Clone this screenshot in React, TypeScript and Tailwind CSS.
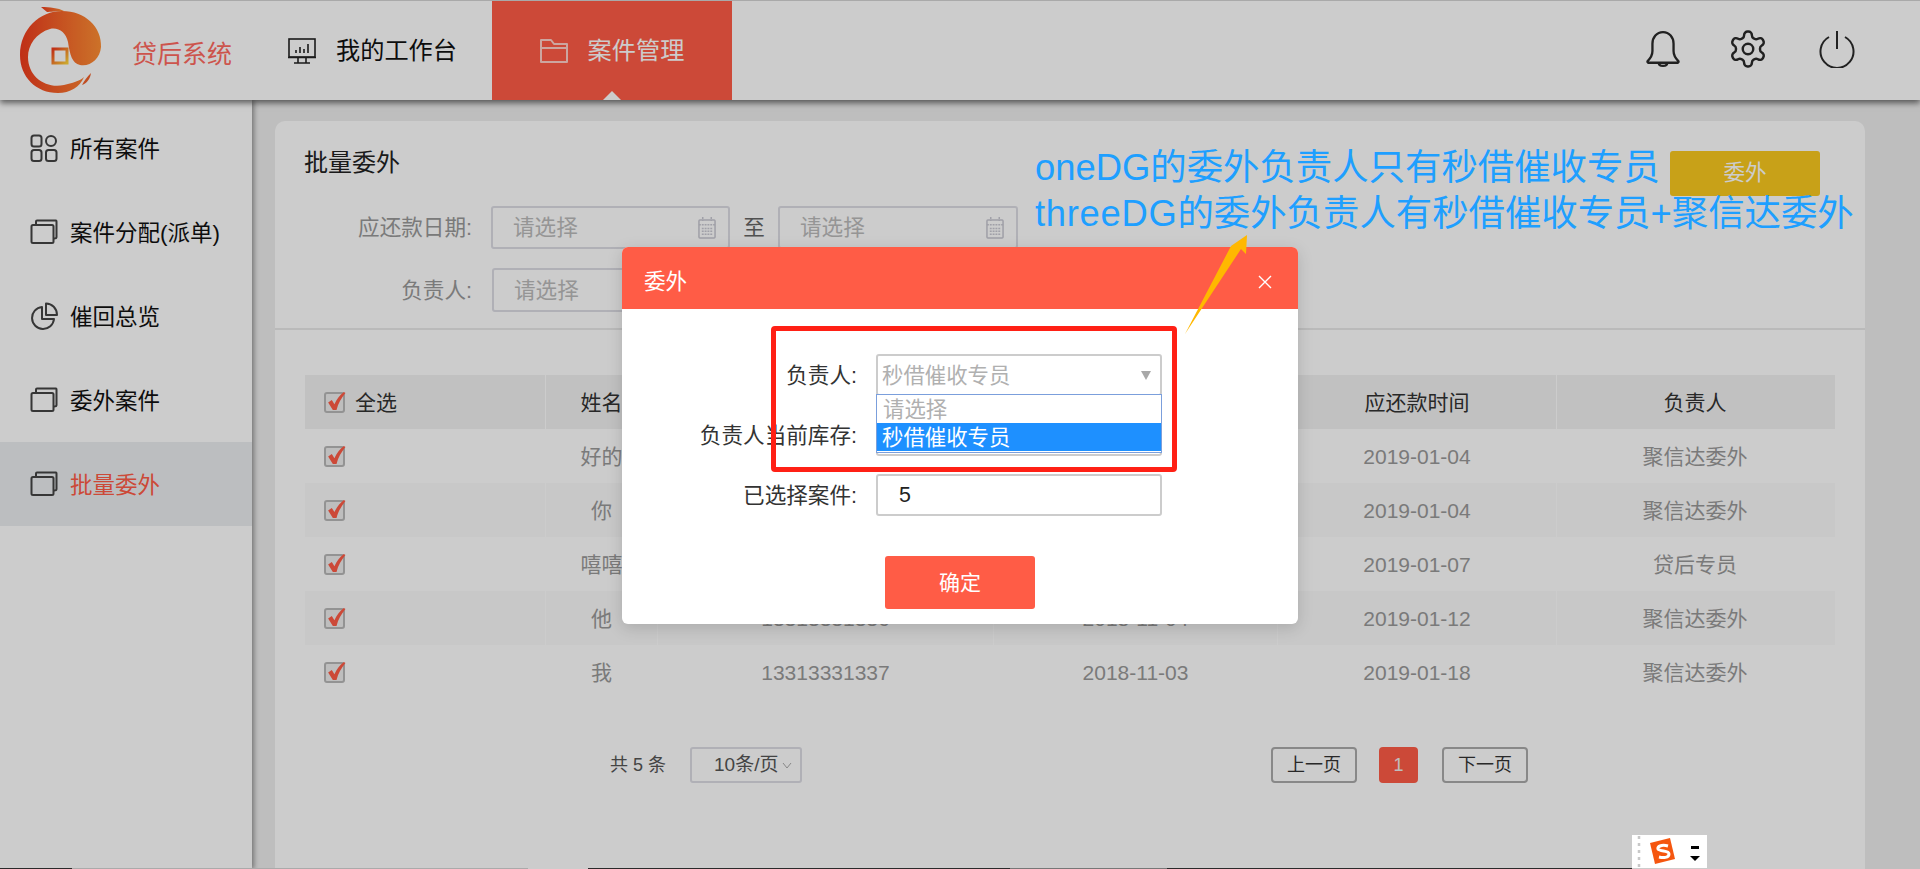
import React from "react";

const FONT = 'font-["Liberation_Sans","Noto_Sans_CJK_SC",sans-serif]';

function Logo() {
  return (
    <svg width="90" height="92" viewBox="16 8 90 92" className="shrink-0">
      <defs>
        <linearGradient id="lg" x1="0" y1="0" x2="1" y2="0">
          <stop offset="0" stopColor="#f03c1e" />
          <stop offset="1" stopColor="#ff8f34" />
        </linearGradient>
        <linearGradient id="sq" x1="0" y1="0" x2="1" y2="1">
          <stop offset="0" stopColor="#f03c1e" />
          <stop offset="1" stopColor="#ffd23a" />
        </linearGradient>
      </defs>
      <path fill="url(#lg)" d="M62 14C85 14 102 30 101 50C100 62 90 70 80 68C72 66 70 58 68 45C66 35 58 30 50 32C36 36 28 48 28 60C28 80 46 92 64 88C72 86 80 84 84 80C80 90 70 96 58 96C36 96 20 80 20 58C20 32 40 14 62 14Z" />
      <path fill="url(#lg)" d="M41 10C50 10 58 11 64 14C56 14 50 15 47 15C45 13 43 12 41 10Z" />
      <path fill="#f0602a" d="M82 88C84 84 87 80 91 76C90 82 87 86 82 88Z" />
      <rect x="53" y="52" width="14" height="14" fill="none" stroke="url(#sq)" strokeWidth="3" />
    </svg>
  );
}

function Monitor() {
  return (
    <svg width="28" height="26" viewBox="0 0 28 26" fill="none" stroke="#222" strokeWidth="1.6">
      <rect x="1" y="1" width="26" height="18" />
      <path d="M0 19.5H28M10 20V25M18 20V25M6 25H22M8 15V12M12 15V9M16 15V11M20 15V6" />
    </svg>
  );
}

function Folder() {
  return (
    <svg width="28" height="26" viewBox="0 0 28 26" fill="none" stroke="#ffd0c8" strokeWidth="2">
      <path d="M1 24V2H11L14 6H27V24ZM1 10H27" strokeLinejoin="round" />
    </svg>
  );
}

function GridIcon() {
  return (
    <svg width="28" height="28" viewBox="0 0 28 28" fill="none" stroke="#444" strokeWidth="2">
      <rect x="1.5" y="1.5" width="10" height="11" rx="2.5" />
      <circle cx="21" cy="7" r="5" />
      <rect x="1.5" y="16" width="10" height="11" rx="2.5" />
      <rect x="16" y="16" width="10.5" height="11" rx="2.5" />
    </svg>
  );
}

function StackIcon() {
  return (
    <svg width="28" height="26" viewBox="0 0 28 26" fill="none" stroke="#444" strokeWidth="2">
      <rect x="1.5" y="6" width="22" height="18" rx="1.5" />
      <path d="M6 6V2.5C6 2 6.5 1.5 7 1.5H26C26.5 1.5 26.5 2 26.5 2.5V18C26.5 19 26 19.5 24 19.5" />
    </svg>
  );
}

function PieIcon() {
  return (
    <svg width="28" height="28" viewBox="0 0 28 28" fill="none" stroke="#444" strokeWidth="2">
      <path d="M12 5A11 11 0 1 0 24 17H12Z" strokeLinejoin="round" />
      <path d="M16 1.5C22 1.5 27 6.5 27 13H16Z" strokeLinejoin="round" />
    </svg>
  );
}

function Calendar() {
  return (
    <svg width="18" height="22" viewBox="0 0 19 23" fill="none" stroke="#c8c8d2" strokeWidth="1.6">
      <rect x="1" y="3" width="17" height="19" rx="1" />
      <path d="M1 8H18M5 0V4M14 0V4M4 12H15M4 15H15M4 18H15" strokeDasharray="2 1" />
    </svg>
  );
}

function Check() {
  return (
    <div className="w-[21px] h-[21px] rounded-[3px] border-2 border-[#b8b8b8] bg-[#eeeeee] relative shrink-0">
      <svg width="20" height="21" viewBox="0 0 19 20" className="absolute left-0 -top-[3px]">
        <path d="M2 11L5.5 8.5L8 12.5C10 8 13 4 17 1L18.5 2C14.5 7 11.5 12 10 18H6.5Z" fill="#ff5c46" />
      </svg>
    </div>
  );
}

const items = [
  { t: "所有案件", i: <GridIcon /> },
  { t: "案件分配(派单)", i: <StackIcon /> },
  { t: "催回总览", i: <PieIcon /> },
  { t: "委外案件", i: <StackIcon /> },
  { t: "批量委外", i: <StackIcon />, active: true },
];

const rows = [
  ["好的", "13313331331", "2018-11-01", "2019-01-04", "聚信达委外"],
  ["你", "13313331332", "2018-11-01", "2019-01-04", "聚信达委外"],
  ["嘻嘻", "13313331335", "2018-11-02", "2019-01-07", "贷后专员"],
  ["他", "13313331336", "2018-11-04", "2019-01-12", "聚信达委外"],
  ["我", "13313331337", "2018-11-03", "2019-01-18", "聚信达委外"],
];

const cols = "grid grid-cols-[241px_112px_336px_284px_279px_276px] h-[54px] items-stretch";

function Cell({ children, last }: { children: React.ReactNode; last?: boolean }) {
  return (
    <div className={`flex items-center justify-center pt-[2px] ${last ? "" : "border-r border-[#ffffff]"}`}>{children}</div>
  );
}

export default function App() {
  return (
    <div className={`relative w-full h-[869px] overflow-hidden bg-[#eeeeee] flex flex-col ${FONT}`}>
      <header className="relative z-10 h-[100px] shrink-0 bg-white border-t border-[#d4d4d4] shadow-[0_3px_6px_rgba(0,0,0,0.55)] flex items-stretch">
        <div className="w-[288px] flex items-center">
          <div className="ml-[16px]">
            <Logo />
          </div>
          <span className="ml-[26px] mt-[8px] text-[25px] leading-none text-[#ff6a60] whitespace-nowrap">贷后系统</span>
        </div>
        <div className="w-[204px] flex items-center gap-[20px]">
          <Monitor />
          <span className="text-[24.2px] pt-[2px] text-[#111]">我的工作台</span>
        </div>
        <div className="relative w-[240px] bg-[#ff5c46] flex items-center justify-center gap-[20px]">
          <Folder />
          <span className="text-[24.2px] pt-[2px] text-white">案件管理</span>
          <div className="absolute bottom-0 left-[111px] w-0 h-0 border-x-[9px] border-x-transparent border-b-[9px] border-b-[#ffffff]" />
        </div>
        <div className="flex-1 flex items-center justify-end pr-[65px] pb-[3px]">
          <svg width="34" height="38" viewBox="0 0 32 36" fill="none" stroke="#2a2a2a" strokeWidth="2.2">
            <path strokeLinejoin="round" d="M16 2C10 2 6 7 6 13V20C6 24 4 27 1.5 29.5C1 30 1.5 31 2 31H30C30.5 31 31 30 30.5 29.5C28 27 26 24 26 20V13C26 7 22 2 16 2Z" />
            <path d="M12 31C12 35 20 35 20 31" />
          </svg>
          <svg width="42" height="42" viewBox="0 0 24 24" className="ml-[47px]" fill="none" stroke="#2a2a2a" strokeWidth="1.4" strokeLinecap="round" strokeLinejoin="round">
            <path d="M12.22 2h-.44a2 2 0 0 0-2 2v.18a2 2 0 0 1-1 1.73l-.43.25a2 2 0 0 1-2 0l-.15-.08a2 2 0 0 0-2.73.73l-.22.38a2 2 0 0 0 .73 2.73l.15.1a2 2 0 0 1 1 1.72v.51a2 2 0 0 1-1 1.74l-.15.09a2 2 0 0 0-.73 2.73l.22.38a2 2 0 0 0 2.73.73l.15-.08a2 2 0 0 1 2 0l.43.25a2 2 0 0 1 1 1.73V20a2 2 0 0 0 2 2h.44a2 2 0 0 0 2-2v-.18a2 2 0 0 1 1-1.73l.43-.25a2 2 0 0 1 2 0l.15.08a2 2 0 0 0 2.73-.73l.22-.39a2 2 0 0 0-.73-2.73l-.15-.08a2 2 0 0 1-1-1.74v-.5a2 2 0 0 1 1-1.74l.15-.09a2 2 0 0 0 .73-2.73l-.22-.38a2 2 0 0 0-2.73-.73l-.15.08a2 2 0 0 1-2 0l-.43-.25a2 2 0 0 1-1-1.73V4a2 2 0 0 0-2-2z" />
            <circle cx="12" cy="12" r="3" />
          </svg>
          <svg width="36" height="38" viewBox="0 0 36 38" className="ml-[50px]" fill="none" stroke="#2a2a2a" strokeWidth="2">
            <path d="M18 1V19" />
            <path d="M10 7A16.5 16.5 0 1 0 26 7" />
          </svg>
        </div>
      </header>

      <div className="flex-1 flex min-h-0">
        <aside className="relative w-[252px] shrink-0 bg-white pt-[6px] shadow-[2px_0_5px_rgba(0,0,0,0.4)]">
          {items.map((it) => (
            <div key={it.t} className={`h-[84px] flex items-center pl-[30px] gap-[12px] ${it.active ? "bg-[#ebeef0]" : ""}`}>
              <span className="w-[28px] flex justify-center">{it.i}</span>
              <span className={`text-[22.5px] pt-[4px] whitespace-nowrap ${it.active ? "text-[#ff5c46]" : "text-[#111]"}`}>{it.t}</span>
            </div>
          ))}
        </aside>

        <main className="flex-1 pt-[21px] pl-[23px] pr-[55px] min-w-0">
          <section className="h-[760px] bg-white rounded-t-[10px]">
            <div className="flex justify-between items-start pt-[30px] pl-[29px] pr-[45px] h-[75px]">
              <h2 className="text-[24px] leading-[24px] text-[#222]">批量委外</h2>
              <button className="w-[150px] h-[45px] rounded-[3px] bg-[#fbca1e] text-white text-[21.6px]">委外</button>
            </div>
            <div className="mt-[10px] h-[43px] flex items-stretch">
              <label className="w-[197px] flex items-center justify-end pt-[2px] text-[21.6px] text-[#999]">应还款日期:</label>
              <div className="ml-[19px] w-[239px] border-2 border-[#dcdce4] rounded-[3px] flex items-center justify-between pl-[20px] pr-[12px] text-[21.6px] text-[#bbb]">
                <span className="pt-[2px]">请选择</span>
                <Calendar />
              </div>
              <span className="w-[48px] flex items-center justify-center pt-[2px] text-[21.6px] text-[#666]">至</span>
              <div className="w-[240px] border-2 border-[#dcdce4] rounded-[3px] flex items-center justify-between pl-[20px] pr-[12px] text-[21.6px] text-[#bbb]">
                <span className="pt-[2px]">请选择</span>
                <Calendar />
              </div>
            </div>
            <div className="mt-[19px] h-[44px] flex items-stretch">
              <label className="w-[197px] flex items-center justify-end pt-[3px] text-[21.6px] text-[#999]">负责人:</label>
              <div className="ml-[20px] w-[239px] border-2 border-[#dcdce4] rounded-[3px] flex items-center pl-[20px] pt-[3px] text-[21.6px] text-[#bbb]">请选择</div>
            </div>
            <div className="mt-[16px] h-[2px] bg-[#e9e9e9]" />
            <div className="mt-[45px] mx-[30px] text-[21px]">
              <div className={`${cols} bg-[#f2f2f2] text-[#333]`}>
                <div className="flex items-center pl-[19px] gap-[10px] border-r border-white">
                  <Check />
                  <span className="pt-[2px]">全选</span>
                </div>
                <Cell>姓名</Cell>
                <Cell>手机号</Cell>
                <Cell>委案时间</Cell>
                <Cell>应还款时间</Cell>
                <Cell last>负责人</Cell>
              </div>
              {rows.map((r, i) => (
                <div key={i} className={`${cols} text-[#999] ${i % 2 === 1 ? "bg-[#fafafa]" : ""}`}>
                  <div className="flex items-center pl-[19px] border-r border-white">
                    <Check />
                  </div>
                  <Cell>{r[0]}</Cell>
                  <Cell>{r[1]}</Cell>
                  <Cell>{r[2]}</Cell>
                  <Cell>{r[3]}</Cell>
                  <Cell last>{r[4]}</Cell>
                </div>
              ))}
            </div>
            <div className="mt-[48px] h-[36px] flex items-stretch text-[18px] pl-[335px]">
              <span className="flex items-center pt-[1px] text-[#555] w-[80px] whitespace-nowrap">共 5 条</span>
              <div className="w-[112px] border-2 border-[#dcdce4] rounded-[3px] flex items-center pl-[22px] pt-[1px] text-[19px] text-[#555] whitespace-nowrap relative">
                10条/页
                <svg width="10" height="8" viewBox="0 0 10 8" className="absolute right-[8px] top-[13px]" fill="none" stroke="#aaa">
                  <path d="M1 1L5 6L9 1" />
                </svg>
              </div>
              <div className="ml-[469px] w-[86px] border-2 border-[#aaaaaa] rounded-[4px] flex items-center justify-center pt-[1px] text-[#333]">上一页</div>
              <div className="ml-[22px] w-[39px] rounded-[4px] bg-[#ff5c46] flex items-center justify-center text-[#eee]">1</div>
              <div className="ml-[24px] w-[86px] border-2 border-[#aaaaaa] rounded-[4px] flex items-center justify-center pt-[1px] text-[#333]">下一页</div>
            </div>
          </section>
        </main>
      </div>

      {/* dim layer */}
      <div className="absolute inset-0 z-20 bg-black/20" />

      {/* modal */}
      <div className="absolute z-30 left-[622px] top-[247px] w-[676px] h-[377px] bg-white rounded-[6px] overflow-hidden shadow-[0_4px_16px_rgba(0,0,0,0.15)]">
        <div className="h-[62px] bg-[#ff5c46] flex items-center justify-between pl-[22px] pr-[26px] text-white text-[21.6px]">
          <span className="pt-[8px]">委外</span>
          <svg width="14" height="14" viewBox="0 0 14 14" className="mt-[7px]" stroke="#fff" strokeWidth="1.4">
            <path d="M1 1L13 13M13 1L1 13" />
          </svg>
        </div>
        <div className="relative pt-[45px] text-[21.6px] text-[#333]">
          <div className="flex h-[42px]">
            <label className="w-[235px] flex items-center justify-end pt-[3px]">负责人:</label>
            <div className="ml-[19px] w-[286px] border-2 border-[#cccccc] rounded-[3px] flex items-center justify-between pl-[4px] pr-[9px] text-[21.4px] text-[#b0b0b0]">
              <span className="pt-[3px]">秒借催收专员</span>
              <span className="w-0 h-0 border-x-[5px] border-x-transparent border-t-[9px] border-t-[#a8a8a8]" />
            </div>
          </div>
          <div className="flex h-[42px] mt-[18px]">
            <label className="w-[235px] flex items-center justify-end pt-[3px] whitespace-nowrap">负责人当前库存:</label>
            <div className="ml-[19px] w-[286px] border-2 border-[#cccccc] rounded-[3px]" />
          </div>
          <div className="flex h-[42px] mt-[18px]">
            <label className="w-[235px] flex items-center justify-end pt-[3px]">已选择案件:</label>
            <div className="ml-[19px] w-[286px] border-2 border-[#cccccc] rounded-[3px] flex items-center pl-[21px] pt-[1px] text-[21.4px] text-[#222]">5</div>
          </div>
          <button className="block mt-[40px] ml-[263px] w-[150px] h-[53px] rounded-[3px] bg-[#ff5c46] text-white text-[21px]">确定</button>
          <div className="absolute left-[254px] top-[85px] w-[286px] h-[59px] bg-white border border-[#7b9fdc] text-[21.4px] leading-[31px]">
            <div className="h-[28px] pl-[6px] text-[#b0b0b0]">请选择</div>
            <div className="h-[28px] pl-[5px] bg-[#1e90ff] text-white">秒借催收专员</div>
          </div>
        </div>
      </div>

      {/* annotations */}
      <div className="absolute z-40 left-[771px] top-[326px] w-[406px] h-[146px] border-[5px] border-[#ff2015] rounded-[4px]" />
      <svg className="absolute z-40 left-[1180px] top-[230px]" width="72" height="108" viewBox="1180 230 72 108">
        <path d="M1185 334L1231 246L1247 235L1246 254L1241 249Z" fill="#ffb800" />
      </svg>
      <div className="absolute z-40 left-[1035px] top-[145px] text-[36.4px] leading-[46px] text-[#1e9fff] whitespace-nowrap">
        <div>oneDG的委外负责人只有秒借催收专员</div>
        <div>
          <span className="tracking-[0.7px]">threeDG</span>的委外负责人有秒借催收专员+聚信达委外
        </div>
      </div>

      {/* input method widget */}
      <svg className="absolute z-40 left-[1632px] top-[835px]" width="75" height="33" viewBox="0 0 75 33">
        <rect width="75" height="33" fill="#ffffff" />
        <path d="M7 1V33" stroke="#c8c8c8" strokeWidth="2.5" strokeDasharray="3 4" />
        <path d="M18 8L38 3L43 24L23 29Z" fill="#f5560f" />
        <path d="M36 11C29 9 25 12 26 14C28 17 37 15 37 19C37 23 31 23 27 22" fill="none" stroke="#fff" strokeWidth="3" />
        <rect x="59" y="11" width="8" height="3" fill="#000" />
        <path d="M58 21H68L63 26Z" fill="#000" />
      </svg>

      {/* taskbar sliver */}
      <div className="absolute z-40 left-0 right-0 bottom-0 h-px flex">
        <div className="w-[72px] bg-[#2a2a2a]" />
        <div className="w-[456px] bg-[#aaaaaa]" />
        <div className="w-[60px]" />
        <div className="w-[422px] bg-[#2a2a2a]" />
        <div className="w-[157px] bg-[#777777]" />
        <div className="w-[465px] bg-[#2a2a2a]" />
      </div>
    </div>
  );
}
